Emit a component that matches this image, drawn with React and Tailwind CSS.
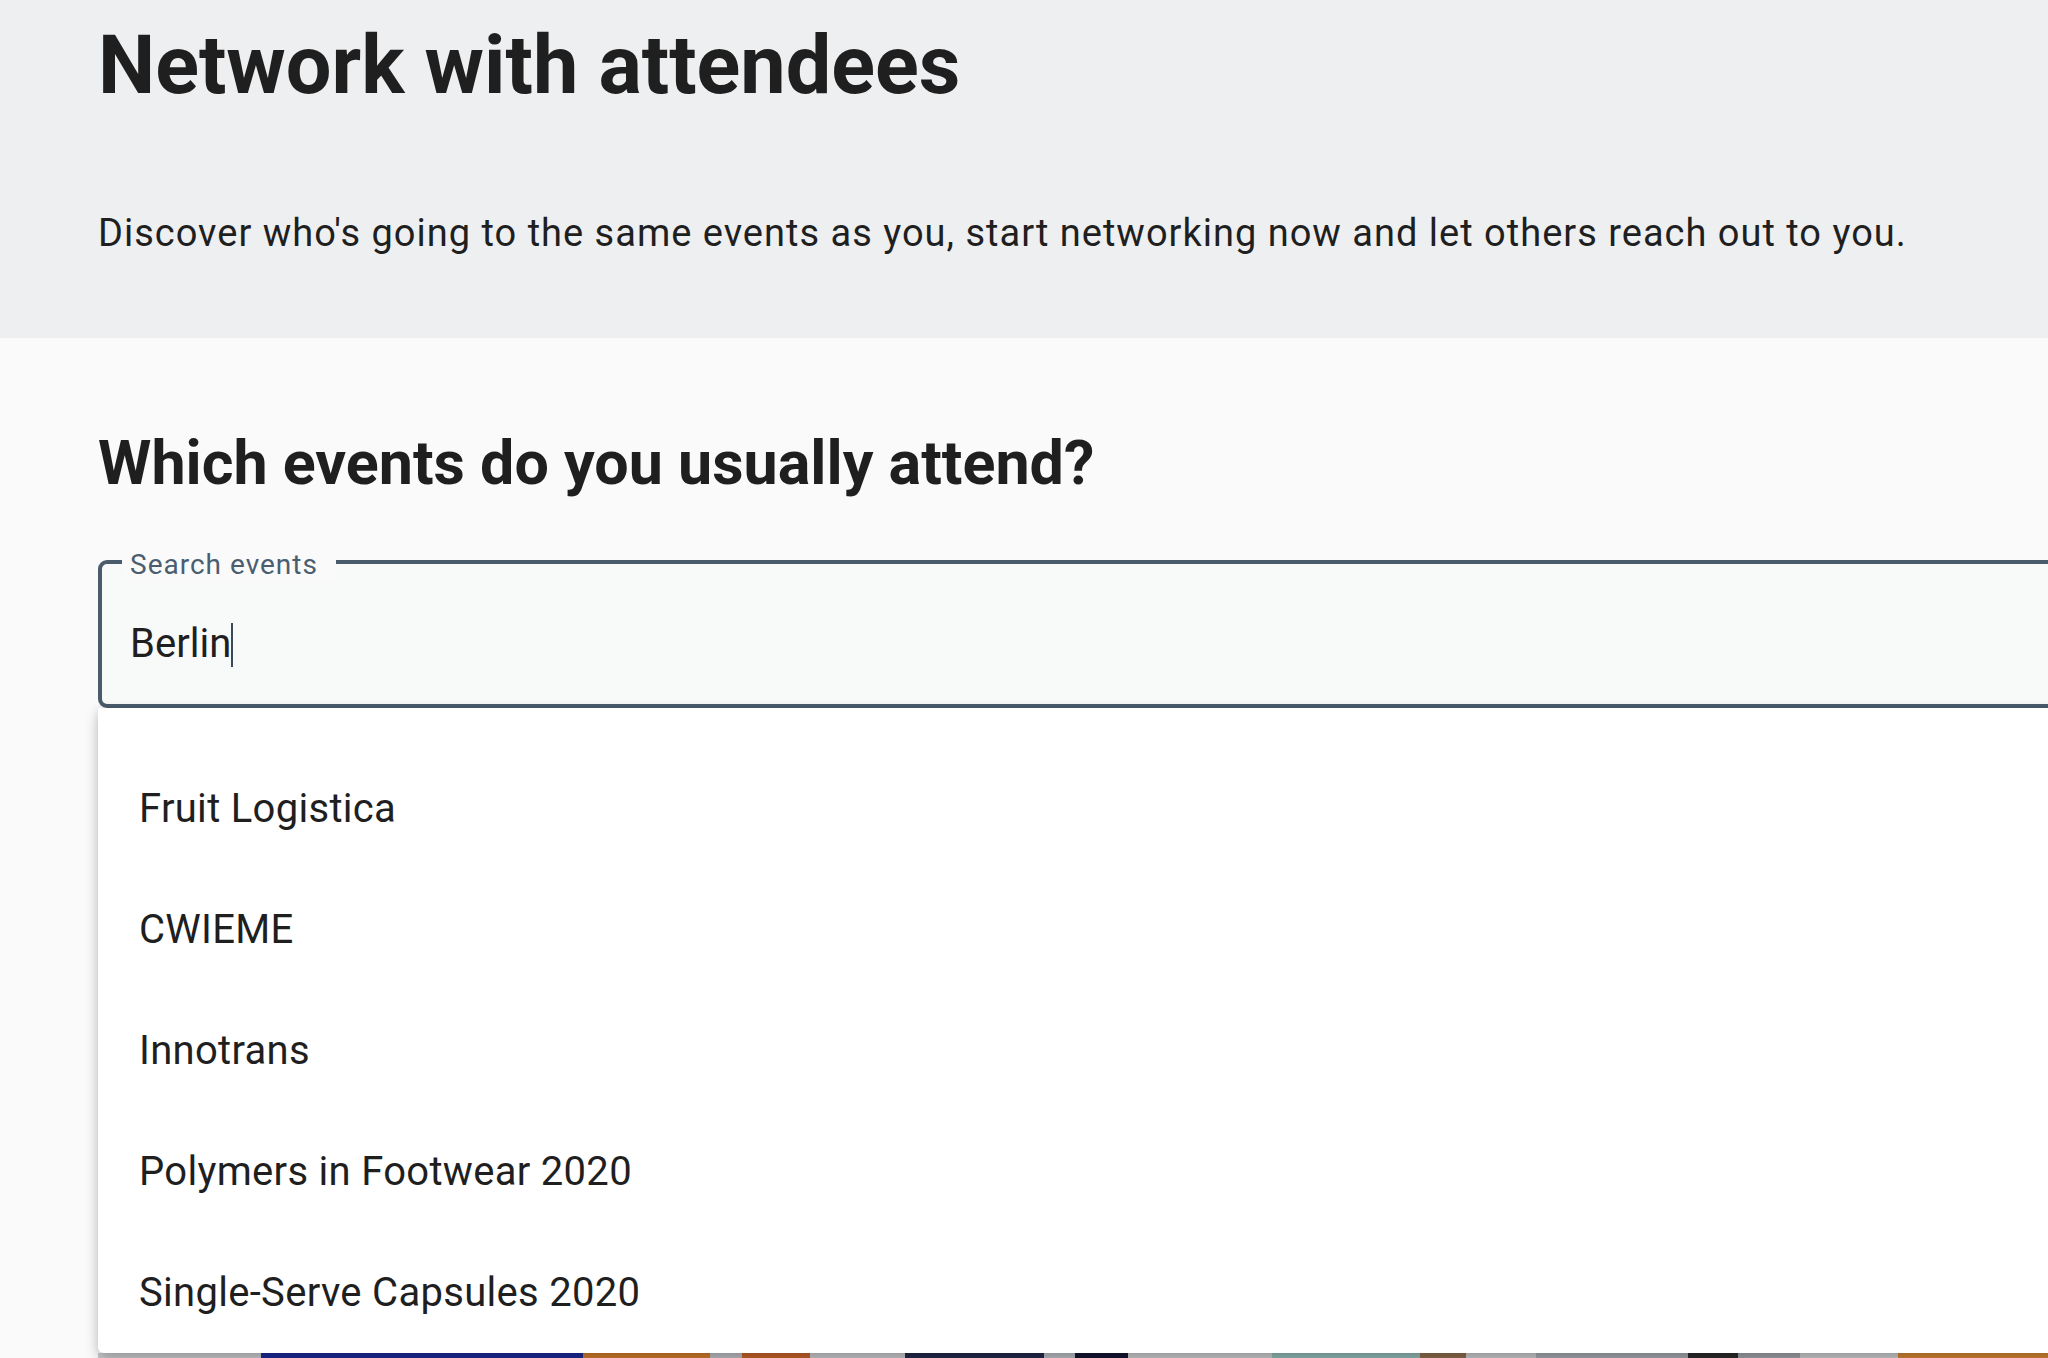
import React from "react";

const events = [
  "Fruit Logistica",
  "CWIEME",
  "Innotrans",
  "Polymers in Footwear 2020",
  "Single-Serve Capsules 2020",
];

// thumbnails of the event cards peeking out below the dropdown
const thumbs = [
  "w-[163px] bg-[#c9cacc]",
  "w-[322px] bg-[#1c2a96]",
  "w-[127px] bg-[#cf7a2c]",
  "w-[32px] bg-[#b9bcc0]",
  "w-[68px] bg-[#c4622a]",
  "w-[95px] bg-[#c5c7ca]",
  "w-[139px] bg-[#23294a]",
  "w-[31px] bg-[#b8bbc0]",
  "w-[53px] bg-[#141632]",
  "w-[144px] bg-[#c8c9cb]",
  "w-[148px] bg-[#8fb7b2]",
  "w-[46px] bg-[#8c6a4c]",
  "w-[70px] bg-[#c7c8ca]",
  "w-[152px] bg-[#a3a7ae]",
  "w-[50px] bg-[#2b2b2b]",
  "w-[62px] bg-[#9c9fa6]",
  "w-[98px] bg-[#c9cacc]",
  "w-[150px] bg-[#d08432]",
];

const App = () => {
  return (
    <div className="min-h-screen w-full overflow-hidden bg-[#fafafa] font-['Roboto',sans-serif] text-[#1f1f1f]">
      {/* ---------------- header ---------------- */}
      <header className="h-[338px] bg-[#eeeff1] pl-[98px] pt-[18px]">
        <h1 className="text-[81px] font-bold leading-[96px]">Network with attendees</h1>
        <p className="mt-[91px] text-[38px] leading-[56px] tracking-[1px]">
          Discover who's going to the same events as you, start networking now and let others reach out to you.
        </p>
      </header>

      {/* ---------------- search ---------------- */}
      <section className="pl-[98px] pt-[87px]">
        <h2 className="text-[61px] font-bold leading-[77px]">Which events do you usually attend?</h2>

        <div className="relative mt-[58px] w-[2100px]">
          <div className="relative h-[148px] rounded-[9px] border-4 border-[#4a5c6c] bg-[#f8f9f9]">
            <span className="absolute -top-[15px] left-[20px] bg-[#fafafa] pl-[8px] pr-[18px] text-[28px] leading-[32px] tracking-[1px] text-[#4a5e70]">
              Search events
            </span>
            <div className="flex items-start pl-[28px] pt-[57px]">
              <span className="text-[40px] leading-[46px]">Berlin</span>
              <span className="mt-[2px] inline-block h-[44px] w-[2px] bg-[#3a4a58]" />
            </div>
          </div>

          <ul className="absolute left-0 right-0 top-full z-10 rounded-b-[6px] bg-white pt-[40px] shadow-[0_6px_14px_rgba(0,0,0,0.22),0_0_10px_rgba(0,0,0,0.08)]">
            {events.map((name) => (
              <li key={name} className="flex h-[121px] items-center pl-[41px] text-[40px] tracking-[0.3px]">
                {name}
              </li>
            ))}
          </ul>
        </div>

        <div className="mt-[645px] flex h-[40px]">
          {thumbs.map((cls, i) => (
            <div key={i} className={`h-full shrink-0 ${cls}`} />
          ))}
        </div>
      </section>
    </div>
  );
};

export default App;
